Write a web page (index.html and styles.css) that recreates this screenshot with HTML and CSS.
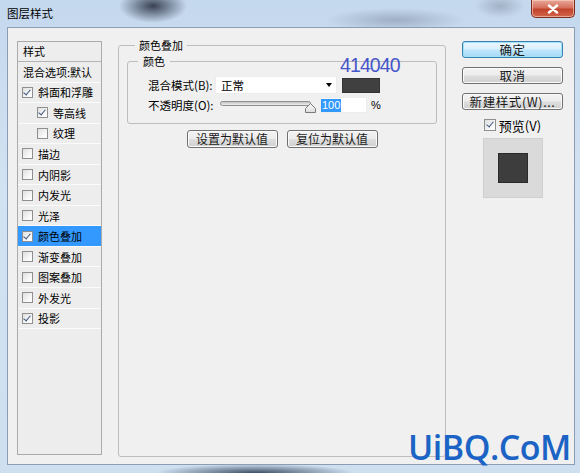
FILE: index.html
```html
<!DOCTYPE html>
<html lang="zh">
<head>
<meta charset="utf-8">
<title>图层样式</title>
<link rel="stylesheet" href="styles.css">
</head>
<body>
<div class="window">
  <div class="titlebar">
    <span class="title">图层样式</span>
    <div class="close"><svg width="14" height="10" viewBox="0 0 14 10"><path d="M3 1.5 L11 8.5 M11 1.5 L3 8.5" stroke="#fff" stroke-width="2.4" stroke-linecap="round"/></svg></div>
  </div>
  <div class="client">
    <ul class="styles">
      <li class="head">样式</li>
      <li class="plain">混合选项:默认</li>
      <li><span class="cb on"></span>斜面和浮雕</li>
      <li class="sub"><span class="cb on"></span>等高线</li>
      <li class="sub"><span class="cb"></span>纹理</li>
      <li><span class="cb"></span>描边</li>
      <li><span class="cb"></span>内阴影</li>
      <li><span class="cb"></span>内发光</li>
      <li><span class="cb"></span>光泽</li>
      <li class="sel"><span class="cb on"></span>颜色叠加</li>
      <li><span class="cb"></span>渐变叠加</li>
      <li><span class="cb"></span>图案叠加</li>
      <li><span class="cb"></span>外发光</li>
      <li><span class="cb on"></span>投影</li>
    </ul>
    <fieldset class="group outer">
      <legend>颜色叠加</legend>
      <fieldset class="group inner">
        <legend>颜色</legend>
        <div class="fields">
          <div class="row">
            <span class="label">混合模式(B):</span>
            <div class="select"><span>正常</span><span class="arrow"></span></div>
            <span class="swatch"></span>
          </div>
          <div class="row row2">
            <span class="label">不透明度(O):</span>
            <svg class="slider" width="96" height="16" viewBox="0 0 96 16">
              <defs>
                <linearGradient id="tr" x1="0" y1="0" x2="0" y2="1">
                  <stop offset="0" stop-color="#bdbdbd"/>
                  <stop offset="1" stop-color="#f4f4f4"/>
                </linearGradient>
                <linearGradient id="th" x1="0" y1="0" x2="0" y2="1">
                  <stop offset="0" stop-color="#fafafa"/>
                  <stop offset="1" stop-color="#dcdcdc"/>
                </linearGradient>
              </defs>
              <rect x="0.5" y="4.5" width="90" height="4" rx="2" fill="url(#tr)" stroke="#8e8e8e"/>
              <path d="M85.5 15.5 L85.5 11.5 L90.5 6.5 L95.5 11.5 L95.5 15.5 Z" fill="url(#th)" stroke="#7a7a7a" stroke-linejoin="round"/>
            </svg>
            <div class="num"><span class="hl">100</span></div>
            <span class="pct">%</span>
          </div>
        </div>
      </fieldset>
      <div class="btn-row">
        <button class="btn small">设置为默认值</button>
        <button class="btn small">复位为默认值</button>
      </div>
    </fieldset>
    <div class="side">
      <button class="btn big default">确定</button>
      <button class="btn big">取消</button>
      <button class="btn big">新建样式(W)...</button>
      <div class="preview-check"><span class="cb on big-cb"></span><span>预览(V)</span></div>
      <div class="preview"><span class="preview-square"></span></div>
    </div>
  </div>
  <div class="annot">414040</div>
  <div class="watermark">UiBQ.CoM</div>
</div>
</body>
</html>
```

FILE: styles.css
```css
html, body {
  margin: 0;
  padding: 0;
}
body {
  width: 580px;
  height: 473px;
  overflow: hidden;
  font-family: "Noto Sans CJK SC", "Microsoft YaHei", sans-serif;
  color: #000;
}
.window {
  position: relative;
  width: 580px;
  height: 473px;
  display: flex;
  flex-direction: column;
  background:
    radial-gradient(ellipse 34px 17px at 153px 6px, rgba(50, 58, 76, 0.95), rgba(50, 58, 76, 0) 100%),
    radial-gradient(ellipse 70px 12px at 395px 20px, rgba(110, 125, 145, 0.45), rgba(110, 125, 145, 0) 100%),
    radial-gradient(ellipse 25px 12px at 500px 6px, rgba(120, 130, 150, 0.45), rgba(120, 130, 150, 0) 100%),
    radial-gradient(ellipse 100px 9px at 255px 473px, rgba(45, 60, 85, 0.9), rgba(45, 60, 85, 0) 100%),
    linear-gradient(180deg, #c4d8ee 0%, #d3e2f2 40%, #cfdff0 100%);
}
.titlebar {
  height: 27px;
  display: flex;
  align-items: flex-start;
  justify-content: space-between;
}
.title {
  font-size: 11.5px;
  line-height: 14px;
  margin: 6px 0 0 7px;
}
.close {
  width: 44px;
  height: 18px;
  margin-right: 5px;
  box-sizing: border-box;
  border: 1px solid #7a2c20;
  border-top: none;
  border-radius: 0 0 5px 5px;
  background: linear-gradient(180deg, #e9a99a 0%, #d6705d 45%, #c1432c 55%, #d2664b 100%);
  box-shadow: inset 0 0 0 1px rgba(255, 210, 200, 0.6);
  display: flex;
  align-items: center;
  justify-content: center;
}
.client {
  margin: 0 5px 0 7px;
  height: 438px;
  box-sizing: border-box;
  border: 1px solid #8a9db4;
  background: #f0f0f0;
  display: flex;
  align-items: flex-start;
  padding: 9px 0 0 9px;
}

/* left list */
.styles {
  margin: 4px 0 0;
  padding: 0;
  list-style: none;
  width: 85px;
  height: 414px;
  box-sizing: border-box;
  border: 1px solid #ababab;
  background: #ededed;
  font-size: 11px;
  overflow: hidden;
}
.styles li {
  height: 20.55px;
  box-sizing: border-box;
  border-bottom: 1px solid #fbfbfb;
  display: flex;
  align-items: center;
  padding-left: 4px;
  line-height: 14px;
  white-space: nowrap;
}
.styles li.head {
  height: 20px;
  border-bottom: 1px solid #b4b4b4;
  padding-left: 5px;
  align-items: flex-start;
  padding-top: 2px;
}
.styles li.plain {
  padding-left: 5px;
}
.styles li.sub {
  padding-left: 19px;
}
.styles li.sel {
  background: #3399ff;
}
.cb {
  flex: none;
  width: 11px;
  height: 11px;
  box-sizing: border-box;
  border: 1px solid #8f8f8f;
  background: linear-gradient(135deg, #dedede 0%, #f6f6f6 60%, #ffffff 100%);
  margin-right: 5px;
  position: relative;
}
.cb.on::after {
  content: "";
  position: absolute;
  left: 2px;
  top: 0px;
  width: 3px;
  height: 6px;
  border: solid #3f5680;
  border-width: 0 1.5px 1.5px 0;
  transform: rotate(40deg);
}
.big-cb {
  width: 12px;
  height: 12px;
}
.big-cb.on::after {
  left: 3px;
  top: 0px;
  height: 6px;
}

/* fieldsets */
.group {
  margin: 0;
  padding: 0;
  min-width: 0;
  box-sizing: border-box;
  border: 1px solid #bdbdbd;
  border-radius: 3px;
}
.group legend {
  font-size: 11px;
  line-height: 16px;
  padding: 0 4px;
}
.outer {
  margin-left: 16px;
  width: 328px;
  height: 420px;
}
.outer > legend {
  margin-left: 16px;
}
.inner {
  margin-left: 8px;
  width: 310px;
  height: 71px;
}
.inner > legend {
  margin-left: 10px;
  padding: 0 5px;
}
.fields {
  padding: 7px 0 0 20px;
}
.row {
  display: flex;
  align-items: center;
  height: 18px;
  font-size: 11.5px;
  line-height: 14px;
}
.row2 {
  margin-top: 3px;
  height: 16px;
}
.label {
  width: 67px;
  flex: none;
  white-space: nowrap;
}
.select {
  width: 122px;
  height: 18px;
  box-sizing: border-box;
  background: #fff;
  border: 1px solid #ececec;
  display: flex;
  align-items: center;
  justify-content: space-between;
  padding: 0 4px 0 5px;
}
.arrow {
  width: 0;
  height: 0;
  border-left: 3.5px solid transparent;
  border-right: 3.5px solid transparent;
  border-top: 4px solid #000;
}
.swatch {
  margin-left: 5px;
  width: 38px;
  height: 15px;
  box-sizing: border-box;
  background: #404040;
  border: 1px solid #333;
}
.slider {
  margin-left: 5px;
  flex: none;
}
.num {
  margin-left: 4px;
  width: 47px;
  height: 16px;
  box-sizing: border-box;
  background: #fff;
  border: 1px solid #ededed;
  display: flex;
  align-items: center;
  font-family: "Liberation Sans", Arial, sans-serif;
  font-size: 11px;
}
.hl {
  background: #3399ff;
  color: #fff;
  line-height: 13px;
  padding: 0 1px;
}
.pct {
  margin-left: 4px;
  font-family: "Liberation Sans", Arial, sans-serif;
  font-size: 11px;
}
.btn-row {
  margin-top: 6px;
  display: flex;
  justify-content: center;
  gap: 9px;
}

/* buttons */
.btn {
  margin: 0;
  padding: 0;
  box-sizing: border-box;
  border: 1px solid #707070;
  border-radius: 3px;
  background: linear-gradient(180deg, #f3f3f3 0%, #ececec 48%, #dedede 52%, #d0d0d0 100%);
  box-shadow: inset 0 0 0 1px #fbfbfb;
  font-family: "Noto Sans CJK SC", sans-serif;
  font-weight: 400;
  color: #1a1a1a;
  display: flex;
  align-items: center;
  justify-content: center;
  white-space: nowrap;
}
.small {
  width: 91px;
  height: 18px;
  font-size: 12px;
  line-height: 14px;
}
.big {
  width: 101px;
  height: 17px;
  font-size: 12.5px;
  line-height: 15px;
  margin-bottom: 9px;
  letter-spacing: 0.6px;
}
.default {
  border-color: #3c7fb1;
  background: linear-gradient(180deg, #eaf6fd 0%, #d9f0fc 48%, #bee6fd 52%, #a7d9f5 100%);
  box-shadow: inset 0 0 0 1px #9fe3f8;
}

/* right column */
.side {
  margin: 4px 0 0 16px;
  width: 101px;
  display: flex;
  flex-direction: column;
  align-items: center;
}
.preview-check {
  margin-top: -1px;
  display: flex;
  align-items: center;
  height: 14px;
  font-size: 13px;
  line-height: 15px;
}
.preview-check .cb {
  margin-right: 3px;
}
.preview {
  margin-top: 6px;
  width: 60px;
  height: 60px;
  box-sizing: border-box;
  border: 1px solid #cfcfcf;
  background: #dadada;
  display: flex;
  align-items: center;
  justify-content: center;
}
.preview-square {
  width: 30px;
  height: 30px;
  box-sizing: border-box;
  background: #3d3d3d;
  border: 1px solid #2a2a2a;
}

/* overlays */
.annot {
  position: absolute;
  left: 340px;
  top: 55px;
  font-family: "Liberation Sans", Arial, sans-serif;
  font-size: 19.5px;
  line-height: 20px;
  letter-spacing: -0.9px;
  color: #4656c8;
}
.watermark {
  position: absolute;
  left: 408px;
  top: 430px;
  font-family: "Open Sans", sans-serif;
  font-weight: 600;
  font-size: 34px;
  line-height: 34px;
  color: #1b63c4;
  letter-spacing: -0.5px;
}
```
